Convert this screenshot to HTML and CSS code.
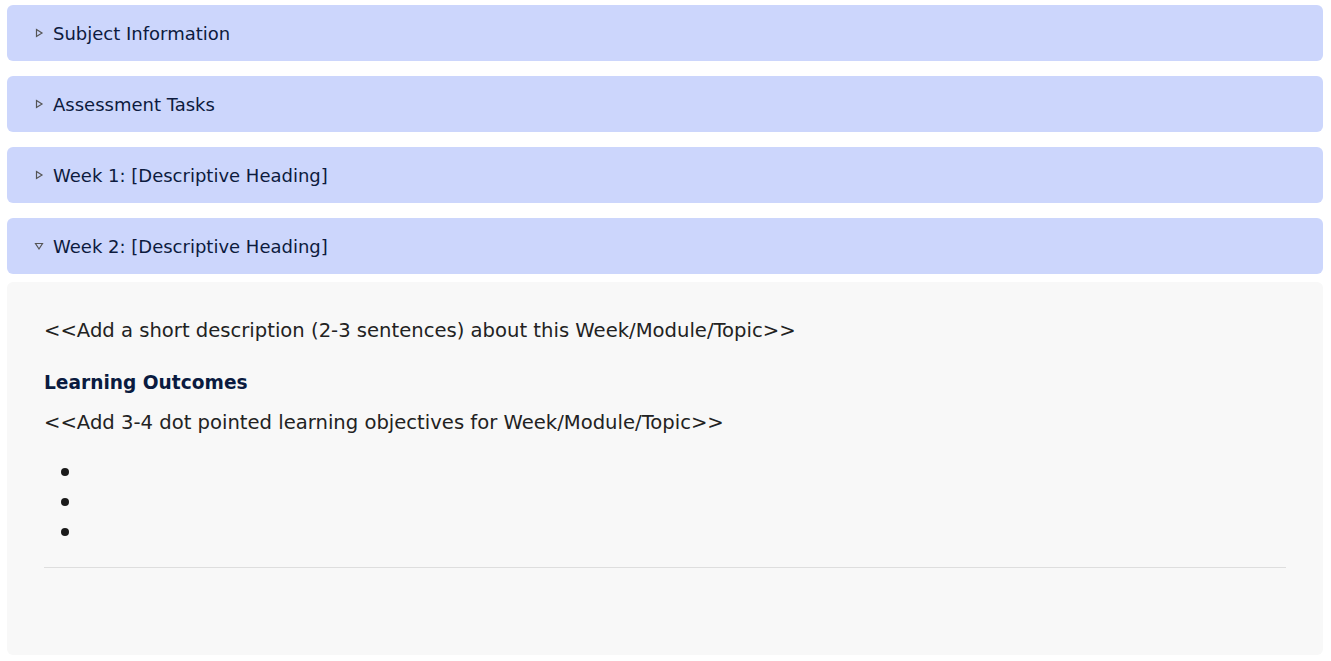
FILE: index.html
```html
<!DOCTYPE html>
<html>
<head>
<meta charset="utf-8">
<link rel="stylesheet" href="styles.css">
</head>
<body>
<div class="accordion">
  <div class="item">
    <div class="summary"><svg class="marker" viewBox="0 0 10 10"><path d="M2.5 1.5 L8 5 L2.5 8.5 Z"/></svg><span>Subject Information</span></div>
  </div>
  <div class="item">
    <div class="summary"><svg class="marker" viewBox="0 0 10 10"><path d="M2.5 1.5 L8 5 L2.5 8.5 Z"/></svg><span>Assessment Tasks</span></div>
  </div>
  <div class="item">
    <div class="summary"><svg class="marker" viewBox="0 0 10 10"><path d="M2.5 1.5 L8 5 L2.5 8.5 Z"/></svg><span>Week 1: [Descriptive Heading]</span></div>
  </div>
  <div class="item open">
    <div class="summary"><svg class="marker" viewBox="0 0 10 10"><path d="M1.5 2.5 L8.5 2.5 L5 8 Z"/></svg><span>Week 2: [Descriptive Heading]</span></div>
    <div class="panel">
      <p class="text">&lt;&lt;Add a short description (2-3 sentences) about this Week/Module/Topic&gt;&gt;</p>
      <h3 class="heading">Learning Outcomes</h3>
      <p class="text">&lt;&lt;Add 3-4 dot pointed learning objectives for Week/Module/Topic&gt;&gt;</p>
      <ul class="list">
        <li></li>
        <li></li>
        <li></li>
      </ul>
      <hr class="rule">
    </div>
  </div>
</div>
</body>
</html>
```

FILE: styles.css
```css
html, body {
  margin: 0;
  padding: 0;
  background: #ffffff;
}
body {
  font-family: "DejaVu Sans", sans-serif;
  color: #222;
}
.accordion {
  padding: 5px 8px 0 7px;
  display: flex;
  flex-direction: column;
  gap: 15px;
}
.summary {
  height: 56px;
  background: #ccd6fc;
  border-radius: 6px;
  display: flex;
  align-items: center;
  padding-left: 27px;
  font-size: 18px;
  color: #0d1b3e;
}
.marker {
  width: 10px;
  height: 10px;
  margin-right: 9px;
  fill: none;
  stroke: #555;
  stroke-width: 1.2;
}
.open .summary {
  margin-bottom: 8px;
}
.panel {
  background: #f8f8f8;
  border-radius: 6px;
  padding: 35px 37px 0 37px;
  height: 338px;
}
.text {
  margin: 0;
  font-size: 19.6px;
  line-height: 28px;
  color: #222;
}
.heading {
  margin: 26px 0 14px;
  font-size: 18.6px;
  line-height: 24px;
  font-weight: bold;
  color: #0a1b40;
}
.list {
  margin: 19px 0 0;
  padding-left: 40px;
  font-size: 18px;
  line-height: 30px;
  color: #1a1a1a;
}
.list li {
  height: 30px;
}
.list li::marker {
  font-size: 26px;
}
.rule {
  margin: 21px 0 0;
  border: 0;
  border-top: 1px solid #dedede;
}
```
